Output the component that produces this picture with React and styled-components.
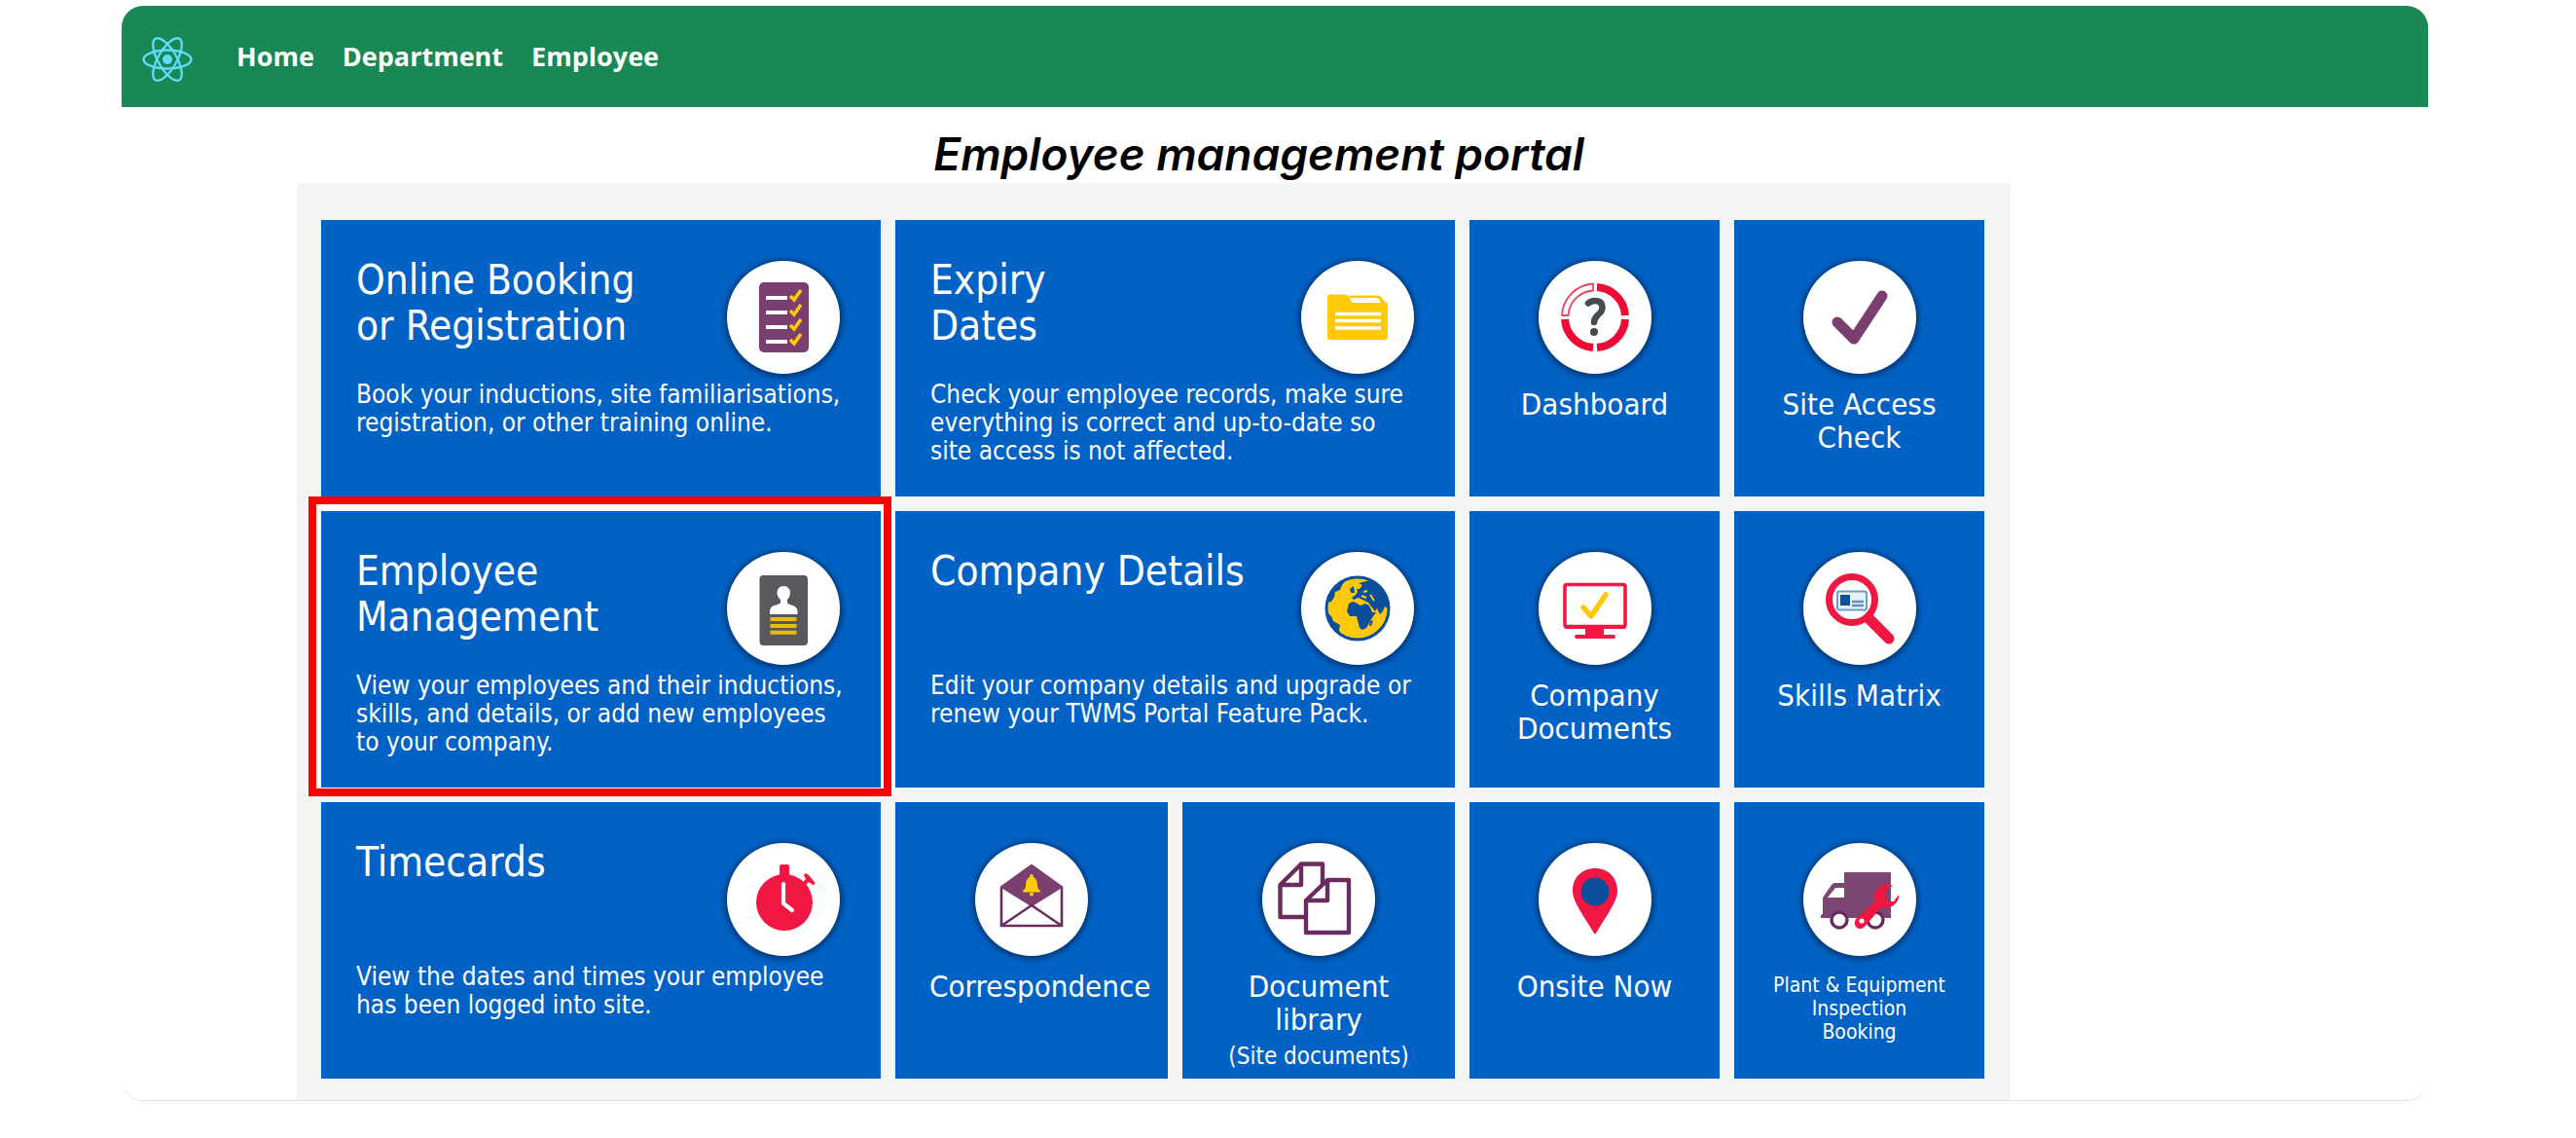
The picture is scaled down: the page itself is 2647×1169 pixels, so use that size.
import React from "react";
import styled, { createGlobalStyle } from "styled-components";

const GlobalStyle = createGlobalStyle`
  *, *::before, *::after { box-sizing: border-box; }
  body {
    margin: 0;
    background: #ffffff;
    font-family: "DejaVu Sans Condensed", "Noto Sans", sans-serif;
  }
  h1, h2, p { margin: 0; font-weight: 400; }
`;

const Page = styled.div`
  padding: 6px 152px 37px 125px;
`;

const Card = styled.div`
  border-bottom: 1px solid #e2e2e2;
  border-radius: 22px;
`;

const Header = styled.header`
  display: flex;
  align-items: center;
  height: 104px;
  padding: 0 21px;
  background: #1a8855;
  border-radius: 22px 22px 0 0;
`;

const LogoLink = styled.a`
  display: flex;
  margin-right: 45px;
`;

const Nav = styled.nav`
  display: flex;
  gap: 29px;
`;

const NavLink = styled.a`
  color: #ffffff;
  font: 700 27px/40px "Open Sans", "Noto Sans", sans-serif;
  text-decoration: none;
`;

const PageTitle = styled.h1`
  padding: 20px 33px 2px 0;
  color: #000000;
  font: italic 600 46px/56px Inter, "Liberation Sans", sans-serif;
  text-align: center;
`;

const Panel = styled.main`
  display: grid;
  gap: 15px;
  margin: 0 429px 0 180px;
  padding: 38px 27px 22px 25px;
  background: #f4f4f4;
`;

const Row = styled.div`
  display: grid;
  grid-template-columns: ${(p) =>
    p.$split
      ? "minmax(0, 575fr) minmax(0, 280fr) minmax(0, 280fr) minmax(0, 257fr) minmax(0, 257fr)"
      : "minmax(0, 575fr) minmax(0, 575fr) minmax(0, 257fr) minmax(0, 257fr)"};
  gap: 15px;
`;

const Tile = styled.a`
  min-height: 284px;
  background: #0062c4;
  color: #ffffff;
  text-decoration: none;
`;

const WideTile = styled(Tile)`
  position: relative;
  padding: 38px 24px 0 36px;
  ${(p) =>
    p.$selected &&
    `
    box-shadow: 0 -1px 0 6px #ffffff;
    &::after {
      content: "";
      position: absolute;
      inset: -15px -11px -9px -13px;
      border: 8px solid #ff0000;
      pointer-events: none;
    }
  `}
`;

const SmallTile = styled(Tile)`
  display: flex;
  flex-direction: column;
  align-items: center;
  padding-top: 42px;
`;

const TileHead = styled.div`
  display: flex;
  justify-content: space-between;
  min-height: 127px;
  padding-right: 18px;
`;

const TileTitle = styled.h2`
  font-size: 42px;
  line-height: 47px;
  white-space: pre-line;
`;

const TileText = styled.p`
  font-size: 26px;
  line-height: 29px;
  white-space: pre-line;
`;

const Circle = styled.span`
  flex: none;
  width: 116px;
  height: 116px;
  margin-top: ${(p) => (p.$inHead ? 4 : 0)}px;
  border-radius: 50%;
  background: #ffffff;
  box-shadow: 0 1px 5px 3px rgba(0, 40, 90, 0.65);
  svg { display: block; }
`;

const Label = styled.h2`
  width: 100%;
  padding: ${(p) => (p.$compact ? "18px" : "14px")} 35px 0;
  font-size: ${(p) => (p.$compact ? 21 : 31)}px;
  line-height: ${(p) => (p.$compact ? 24 : 34)}px;
  text-align: center;
  white-space: pre-line;
`;

const SubLabel = styled.p`
  padding-top: 7px;
  font-size: 24px;
  line-height: 28px;
`;

const PURPLE = "#7b3f6f";
const PLUM = "#6a2c5e";
const RED = "#f01742";
const YELLOW = "#ffc907";
const NAVY = "#0b4f9c";

const icons = {
  checklist: (
    <>
      <rect x="-25" y="-36" width="51" height="72" rx="5" fill={PURPLE} />
      {[-20, -5, 10, 25].map((y) => (
        <g key={y}>
          <path d={`M-18 ${y}H4`} stroke="#fff" strokeWidth="4" />
          <path d={`M7 ${y - 2}l4 4l7 -10`} fill="none" stroke={YELLOW} strokeWidth="3.6" />
        </g>
      ))}
    </>
  ),
  folder: (
    <>
      <path d="M-29 -23.5H-13Q-10 -23.5 -9 -21L-5 -15H31V21Q31 23 29 23H-29Q-31 23 -31 21V-21Q-31 -23.5 -29 -23.5Z" fill={YELLOW} />
      <path d="M-9 -22.5H20Q23 -22.5 25 -20L31 -13H24L22 -18Q21 -20 19 -20H-8Z" fill={YELLOW} />
      <path d="M-8 -20H19Q22 -20 24 -15.5H-4Q-6 -15.5 -8 -20Z" fill="#fff" />
      <path d="M-23 -3.5H24M-23 3.5H24M-23 11H24" stroke="#fff" strokeWidth="3.4" />
    </>
  ),
  dashboard: (
    <>
      <g fill="none" stroke="#ed0a34" strokeWidth="8">
        <path d="M2 -31A31 31 0 0 1 31 -2" />
        <path d="M31 2A31 31 0 0 1 2 31" />
        <path d="M-2 31A31 31 0 0 1 -31 2" />
      </g>
      <path d="M-2 -34.5V-27.5A27 27 0 0 0 -27.5 -2H-34A34 34 0 0 1 -2 -34.5Z" fill="#fff" stroke="#ee4160" strokeWidth="1.8" />
      <path d="M-7 -14.5Q-4 -17 0 -17Q7.5 -17 7.5 -10Q7.5 -6 3.5 -3Q-1 1 -1 5" fill="none" stroke="#454b50" strokeWidth="6.4" strokeLinecap="round" />
      <circle cx="-1" cy="15" r="4" fill="#454b50" />
    </>
  ),
  check: <path d="M-23 5L-6 22L23 -22" fill="none" stroke={PURPLE} strokeWidth="11" strokeLinecap="round" strokeLinejoin="round" />,
  badge: (
    <>
      <rect x="-24.5" y="-34" width="49.5" height="72" rx="4" fill="#58595d" />
      <path d="M0 -23C4.5 -23 7 -20 7 -16Q7 -12 4 -9V-6Q5 -4 10 -3Q14.5 -1 14.5 3V6H-14V3Q-14 -1 -10 -3Q-4 -4 -3 -6V-9Q-6.5 -12 -6.5 -16C-6.5 -20 -4 -23 0 -23Z" fill="#fff" />
      <path d="M-13.5 11H13.5M-13.5 18H13.5M-13.5 24.7H13.5" stroke="#ebbb0c" strokeWidth="4" />
    </>
  ),
  globe: (
    <>
      <circle r="32" fill={YELLOW} stroke={NAVY} strokeWidth="3" />
      <g fill={NAVY}>
        <path d="M-9 -5L-5 -7L-2 -6L3 -3L8 -5L12 -3L15 4L19 4L14 11L12 15L9 20L5 22L2 20L0 12L-1 8L-8 8L-11 3Z" />
        <path d="M-6 -11L-2 -14L0 -17L-1 -20L2 -20L5 -24L1 -26L9 -28L14 -29L25 -21L31 -9L31 0L28 -2L26 3L23 6L20 0L18 3L14 -2L11 -6L5 -9L1 -11L-4 -9Z" />
        <path d="M-8 -20L-4 -23L-3 -16L-7 -16ZM-28 -17L-17 -28L-11 -30L-16 -24L-18 -19L-23 -17L-24 -12L-27 -7L-31 -6Z" />
        <path d="M-32 3L-27 8L-25 13L-18 17L-19 22L-17 28L-27 19Z" />
        <path d="M13 13L16 12L14 18L12 18Z" />
      </g>
      <path d="M4 -13L9 -11M13 -14L17 -8M6 -17L10 -18" stroke={YELLOW} strokeWidth="2" />
    </>
  ),
  monitor: (
    <>
      <rect x="-31" y="-24.5" width="62" height="43" rx="2" fill="none" stroke={RED} strokeWidth="3.6" />
      <path d="M-32 17H32V19Q32 21 30 21H9V27H19Q21 27 21 29Q21 31 19 31H-19Q-21 31 -21 29Q-21 27 -19 27H-10V21H-30Q-32 21 -32 19Z" fill={RED} />
      <path d="M-12 -1L-4 8L11 -14" fill="none" stroke={YELLOW} strokeWidth="5.6" strokeLinecap="round" strokeLinejoin="round" />
    </>
  ),
  search: (
    <>
      <path d="M6 7L30 31" stroke={RED} strokeWidth="11" strokeLinecap="round" />
      <circle cx="-8" cy="-9" r="23.5" fill="#fff" stroke={RED} strokeWidth="7" />
      <rect x="-23" y="-17.5" width="30" height="19" rx="2" fill="#e8f1f8" stroke="#6d9cc5" strokeWidth="2" />
      <rect x="-20" y="-14" width="10" height="11" fill={NAVY} />
      <path d="M-8 -7H4M-8 -3H4" stroke="#5e90bd" strokeWidth="2.5" />
    </>
  ),
  timer: (
    <>
      <circle cx="1" cy="3" r="29" fill={RED} />
      <path d="M-4 -24V-34Q-4 -36 -2 -36H4Q6 -36 6 -34V-24ZM20 -18L23 -21L21 -25Q22 -28 25 -26L32 -18Q33 -15 30 -15L26 -18L23 -15Z" fill={RED} />
      <path d="M0 -16V4L9 11" fill="none" stroke="#fff" strokeWidth="4.2" strokeLinecap="round" strokeLinejoin="round" />
    </>
  ),
  mail: (
    <>
      <path d="M-31 -13V27H31V-13" fill="none" stroke={PLUM} strokeWidth="2.6" />
      <path d="M0 -36L32 -13L0 7L-32 -13Z" fill={PURPLE} stroke={PURPLE} strokeLinejoin="round" />
      <path d="M-31 27L0 6L31 27" fill="none" stroke={PLUM} strokeWidth="2.4" />
      <path d="M0 -26Q2 -26 2 -23Q6 -21 6 -14Q6 -11 9 -9V-7.5H-9V-9Q-6 -11 -6 -14Q-6 -21 -2 -23Q-2 -26 0 -26Z" fill="#ffcb05" />
      <circle cy="-5.5" r="2" fill="#ffcb05" />
    </>
  ),
  documents: (
    <g fill="none" stroke={PLUM} strokeWidth="4.4" strokeLinejoin="round">
      <path d="M4 -14V-36.5H-18L-39.5 -15V18H-14M-18 -36.5V-15H-39.5" />
      <path d="M9 -20H31V34H-13V1ZM9 -20V1H-13" />
    </g>
  ),
  pin: (
    <>
      <path d="M0 -32C14 -32 23 -22 23 -9C23 1 15 12 0 36C-15 12 -23 1 -23 -9C-23 -22 -14 -32 0 -32Z" fill={RED} />
      <circle cy="-8" r="14.5" fill={NAVY} />
    </>
  ),
  truck: (
    <>
      <path d="M-16 -27Q-16 -28 -15 -28H31Q32 -28 32 -27V19H-40V16L-38 15V-2L-29 -15Q-28 -17 -25 -17H-16Z" fill="#7b4671" />
      <path d="M-33 -2L-25 -12H-16V-2Z" fill="#fff" />
      <circle cx="-21" cy="21" r="8" fill="#fff" stroke={PLUM} strokeWidth="3.4" />
      <circle cx="16" cy="21" r="8" fill="#fff" stroke={PLUM} strokeWidth="3.4" />
      <path d="M34 -14Q25 -18 18 -11Q13 -5 16 2L-4 20Q-7 25 -3 29Q2 32 6 27L22 8Q31 10 37 4Q41 -1 40 -5L35 2H29L26 -4L28 -11Z" fill={RED} />
      <circle cx="2" cy="22" r="2.6" fill="#fff" />
    </>
  ),
};

function TileIcon({ name, inHead }) {
  return (
    <Circle $inHead={inHead}>
      <svg width="116" height="116" viewBox="-58 -58 116 116" aria-hidden="true">
        {icons[name]}
      </svg>
    </Circle>
  );
}

function Wide({ title, text, icon, selected }) {
  return (
    <WideTile href="#" $selected={selected}>
      <TileHead>
        <TileTitle>{title}</TileTitle>
        <TileIcon name={icon} inHead />
      </TileHead>
      <TileText>{text}</TileText>
    </WideTile>
  );
}

function Small({ label, icon, sub, compact }) {
  return (
    <SmallTile href="#">
      <TileIcon name={icon} />
      <Label $compact={compact}>{label}</Label>
      {sub && <SubLabel>{sub}</SubLabel>}
    </SmallTile>
  );
}

function ReactLogo() {
  return (
    <svg width="52" height="56" viewBox="-26 -31 52 56" fill="none" stroke="#61dafb" strokeWidth="2.4" aria-hidden="true">
      <circle r="5" fill="#61dafb" stroke="none" />
      {[0, 60, 120].map((angle) => (
        <ellipse key={angle} rx="24.5" ry="9.5" transform={`rotate(${angle})`} />
      ))}
    </svg>
  );
}

export default function App() {
  return (
    <>
      <GlobalStyle />
      <Page>
        <Card>
          <Header>
            <LogoLink href="#" aria-label="React">
              <ReactLogo />
            </LogoLink>
            <Nav>
              <NavLink href="#">Home</NavLink>
              <NavLink href="#">Department</NavLink>
              <NavLink href="#">Employee</NavLink>
            </Nav>
          </Header>
          <PageTitle>Employee management portal</PageTitle>
          <Panel>
            <Row>
              <Wide
                title={"Online Booking\nor Registration"}
                text={"Book your inductions, site familiarisations,\nregistration, or other training online."}
                icon="checklist"
              />
              <Wide
                title={"Expiry\nDates"}
                text={"Check your employee records, make sure\neverything is correct and up-to-date so\nsite access is not affected."}
                icon="folder"
              />
              <Small label="Dashboard" icon="dashboard" />
              <Small label={"Site Access\nCheck"} icon="check" />
            </Row>
            <Row>
              <Wide
                title={"Employee\nManagement"}
                text={"View your employees and their inductions,\nskills, and details, or add new employees\nto your company."}
                icon="badge"
                selected
              />
              <Wide
                title="Company Details"
                text={"Edit your company details and upgrade or\nrenew your TWMS Portal Feature Pack."}
                icon="globe"
              />
              <Small label={"Company\nDocuments"} icon="monitor" />
              <Small label="Skills Matrix" icon="search" />
            </Row>
            <Row $split>
              <Wide
                title="Timecards"
                text={"View the dates and times your employee\nhas been logged into site."}
                icon="timer"
              />
              <Small label="Correspondence" icon="mail" />
              <Small label={"Document\nlibrary"} icon="documents" sub="(Site documents)" />
              <Small label="Onsite Now" icon="pin" />
              <Small label={"Plant & Equipment\nInspection\nBooking"} icon="truck" compact />
            </Row>
          </Panel>
        </Card>
      </Page>
    </>
  );
}
